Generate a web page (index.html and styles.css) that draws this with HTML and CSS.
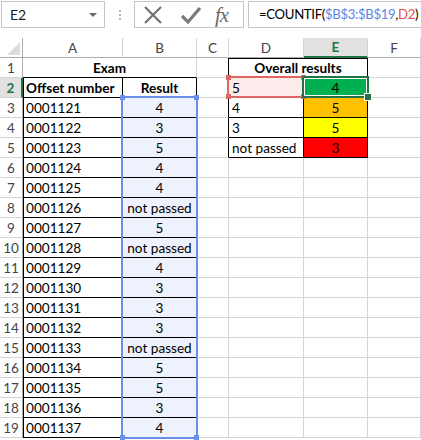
FILE: index.html
```html
<!DOCTYPE html>
<html>
<head>
<meta charset="utf-8">
<link rel="stylesheet" href="styles.css">
</head>
<body>
<div class="app">
  <div class="toolbar">
    <div class="namebox"><span>E2</span><span class="caret"></span></div>
    <div class="dots"><i></i><i></i><i></i></div>
    <div class="fxgroup">
      <svg class="ic-x" width="20" height="20" viewBox="0 0 20 20"><path d="M2 2 L18 18 M18 2 L2 18" stroke="#6f6f6f" stroke-width="2" fill="none"/></svg>
      <svg class="ic-ok" width="22" height="20" viewBox="0 0 22 20"><path d="M2 11 L8 17 L20 3" stroke="#7a7a7a" stroke-width="3.2" fill="none"/></svg>
      <span class="fx">fx</span>
    </div>
    <div class="formula">=COUNTIF(<span class="ref-b">$B$3:$B$19</span>,<span class="ref-r">D2</span>)</div>
  </div>

  <div class="sheet">
    <div class="grid">
      <div class="corner"><span class="tri"></span></div>
      <div class="ch">A</div><div class="ch">B</div><div class="ch">C</div><div class="ch">D</div><div class="ch sel">E</div><div class="ch">F</div>

      <div class="rh">1</div>
      <div class="c span2 b center bb">Exam</div>
      <div class="c br"></div>
      <div class="c span2 b center bb br tb">Overall results</div>
      <div class="c"></div>

      <div class="rh sel">2</div>
      <div class="c b bb br lb">Offset number</div>
      <div class="c b center bb br">Result</div>
      <div class="c br"></div>
      <div class="c bb br pink">5</div>
      <div class="c center bb br green">4</div>
      <div class="c"></div>

      <div class="rh">3</div><div class="c bb br lb">0001121</div><div class="c center bb br blue">4</div><div class="c br"></div><div class="c bb br">4</div><div class="c center bb br orange">5</div><div class="c"></div>
      <div class="rh">4</div><div class="c bb br lb">0001122</div><div class="c center bb br blue">3</div><div class="c br"></div><div class="c bb br">3</div><div class="c center bb br yellow">5</div><div class="c"></div>
      <div class="rh">5</div><div class="c bb br lb">0001123</div><div class="c center bb br blue">5</div><div class="c br"></div><div class="c bb br">not passed</div><div class="c center bb br red">3</div><div class="c"></div>
      <div class="rh">6</div><div class="c bb br lb">0001124</div><div class="c center bb br blue">4</div><div class="c"></div><div class="c"></div><div class="c"></div><div class="c"></div>
      <div class="rh">7</div><div class="c bb br lb">0001125</div><div class="c center bb br blue">4</div><div class="c"></div><div class="c"></div><div class="c"></div><div class="c"></div>
      <div class="rh">8</div><div class="c bb br lb">0001126</div><div class="c center bb br blue">not passed</div><div class="c"></div><div class="c"></div><div class="c"></div><div class="c"></div>
      <div class="rh">9</div><div class="c bb br lb">0001127</div><div class="c center bb br blue">5</div><div class="c"></div><div class="c"></div><div class="c"></div><div class="c"></div>
      <div class="rh">10</div><div class="c bb br lb">0001128</div><div class="c center bb br blue">not passed</div><div class="c"></div><div class="c"></div><div class="c"></div><div class="c"></div>
      <div class="rh">11</div><div class="c bb br lb">0001129</div><div class="c center bb br blue">4</div><div class="c"></div><div class="c"></div><div class="c"></div><div class="c"></div>
      <div class="rh">12</div><div class="c bb br lb">0001130</div><div class="c center bb br blue">3</div><div class="c"></div><div class="c"></div><div class="c"></div><div class="c"></div>
      <div class="rh">13</div><div class="c bb br lb">0001131</div><div class="c center bb br blue">3</div><div class="c"></div><div class="c"></div><div class="c"></div><div class="c"></div>
      <div class="rh">14</div><div class="c bb br lb">0001132</div><div class="c center bb br blue">3</div><div class="c"></div><div class="c"></div><div class="c"></div><div class="c"></div>
      <div class="rh">15</div><div class="c bb br lb">0001133</div><div class="c center bb br blue">not passed</div><div class="c"></div><div class="c"></div><div class="c"></div><div class="c"></div>
      <div class="rh">16</div><div class="c bb br lb">0001134</div><div class="c center bb br blue">5</div><div class="c"></div><div class="c"></div><div class="c"></div><div class="c"></div>
      <div class="rh">17</div><div class="c bb br lb">0001135</div><div class="c center bb br blue">5</div><div class="c"></div><div class="c"></div><div class="c"></div><div class="c"></div>
      <div class="rh">18</div><div class="c bb br lb">0001136</div><div class="c center bb br blue">3</div><div class="c"></div><div class="c"></div><div class="c"></div><div class="c"></div>
      <div class="rh">19</div><div class="c bb br lb">0001137</div><div class="c center bb br blue">4</div><div class="c"></div><div class="c"></div><div class="c"></div><div class="c"></div>
    </div>

    <div class="selrange range-b"><i class="h tl"></i><i class="h tr"></i><i class="h bl"></i><i class="h br2"></i></div>
    <div class="selrange range-d"><i class="h tl"></i><i class="h tr"></i><i class="h bl"></i><i class="h br2"></i></div>
    <div class="active"><i class="fill"></i></div>
  </div>
</div>
</body>
</html>
```

FILE: styles.css
```css
html, body {
  margin: 0;
  padding: 0;
  background: #ffffff;
}
body {
  width: 421px;
  height: 440px;
  overflow: hidden;
  font-family: Lato, "Liberation Sans", sans-serif;
  color: #000;
}
.app {
  display: flex;
  flex-direction: column;
}

/* toolbar */
.toolbar {
  height: 38px;
  display: flex;
  align-items: flex-start;
  padding: 1px 0 0 1px;
  box-sizing: border-box;
}
.namebox {
  width: 104px;
  height: 27px;
  box-sizing: border-box;
  border: 1px solid #c6c6c6;
  display: flex;
  align-items: center;
  justify-content: space-between;
  padding: 0 7px 0 8px;
  font-size: 14px;
  color: #222;
}
.caret {
  width: 0;
  height: 0;
  border-left: 4px solid transparent;
  border-right: 4px solid transparent;
  border-top: 4px solid #6a6a6a;
}
.dots {
  width: 29px;
  height: 27px;
  display: flex;
  flex-direction: column;
  align-items: center;
  justify-content: center;
  gap: 2px;
}
.dots i {
  width: 2px;
  height: 2px;
  background: #b4b4b4;
}
.fxgroup {
  width: 110px;
  height: 27px;
  box-sizing: border-box;
  border: 1px solid #c6c6c6;
  display: flex;
  align-items: center;
  padding-left: 8px;
}
.ic-ok { margin-left: 17px; }
.fx {
  margin-left: 13px;
  font-family: "Liberation Serif", serif;
  font-style: italic;
  font-size: 21px;
  color: #6a6a6a;
  letter-spacing: -1px;
  line-height: 20px;
}
.formula {
  margin-left: 4px;
  flex: 1;
  height: 27px;
  box-sizing: border-box;
  border: 1px solid #c6c6c6;
  border-right: none;
  padding-left: 10px;
  font-size: 13.2px;
  letter-spacing: -0.35px;
  line-height: 25px;
  white-space: nowrap;
  overflow: hidden;
}
.ref-b { color: #5b86e5; }
.ref-r { color: #e0504f; }

/* sheet */
.sheet {
  position: relative;
}
.grid {
  display: grid;
  grid-template-columns: 23px 100px 74px 32px 75px 64px 1fr;
  grid-auto-rows: 20px;
  font-size: 13.6px;
}
.grid > div {
  box-sizing: border-box;
  border-right: 1px solid #d4d4d4;
  border-bottom: 1px solid #d4d4d4;
  white-space: nowrap;
  overflow: hidden;
}
.corner {
  position: relative;
  border-bottom-color: #ababab !important;
  border-right-color: #ababab !important;
}
.tri {
  position: absolute;
  right: 2px;
  bottom: 2px;
  width: 0;
  height: 0;
  border-left: 13px solid transparent;
  border-bottom: 13px solid #dcdcdc;
}
.ch {
  text-align: center;
  color: #444;
  font-size: 13.5px;
  line-height: 20px;
  border-bottom-color: #ababab !important;
}
.ch.sel {
  background: #e1e1e1;
  color: #217346;
  font-weight: bold;
  border-bottom: 2px solid #217346 !important;
  line-height: 19px;
}
.rh {
  text-align: center;
  color: #444;
  font-size: 13.5px;
  line-height: 20px;
  border-right-color: #ababab !important;
}
.rh.sel {
  background: #e1e1e1;
  color: #217346;
  font-weight: bold;
  border-right: 2px solid #217346 !important;
}
.c {
  line-height: 21px;
  padding-left: 3px;
}
.span2 { grid-column: span 2; }
.center { text-align: center; padding-left: 0; }
.b { font-weight: bold; }
.grid > .bb { border-bottom-color: #000; }
.grid > .br { border-right-color: #000; }
.lb { box-shadow: inset 1px 0 0 #000; }
.tb { box-shadow: inset 0 1px 0 #000; }
.blue { background: #eef2fc; }
.pink { background: #fcebeb; }
.green { background: #00b050; }
.orange { background: #ffc000; }
.yellow { background: #ffff00; }
.red { background: #ff0000; }

/* selection overlays */
.selrange {
  position: absolute;
  box-sizing: border-box;
  border: 2px solid;
}
.range-b {
  left: 121px;
  top: 58px;
  width: 77px;
  height: 343px;
  border-color: #6a8fe8;
}
.range-d {
  left: 227px;
  top: 38px;
  width: 78px;
  height: 22px;
  border-color: #e06666;
}
.h {
  position: absolute;
  width: 5px;
  height: 5px;
}
.range-b .h { background: #6a8fe8; }
.range-d .h { background: #e06666; }
.h.tl { left: -3px; top: -3px; }
.h.tr { right: -3px; top: -3px; }
.h.bl { left: -3px; bottom: -3px; }
.h.br2 { right: -3px; bottom: -3px; }
.active {
  position: absolute;
  left: 302px;
  top: 38px;
  width: 67px;
  height: 22px;
  box-sizing: border-box;
  border: 2px solid #217346;
  box-shadow: inset 0 0 0 1px #fff;
}
.fill {
  position: absolute;
  right: -5px;
  bottom: -5px;
  width: 6px;
  height: 6px;
  background: #217346;
  border: 1px solid #fff;
}
```
